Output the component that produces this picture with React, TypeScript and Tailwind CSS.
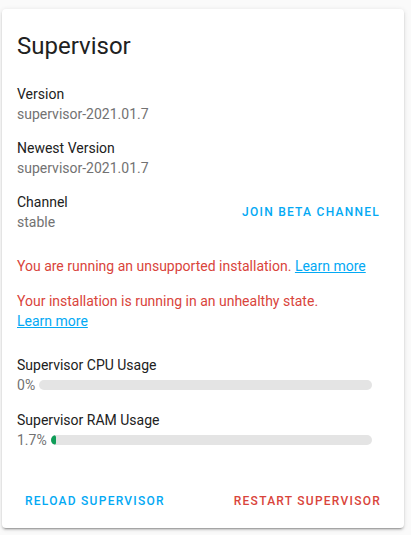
const Info = ({ label, value, className = '' }: { label: string; value: string; className?: string }) => (
    <div className={className}>
        <div className="text-[14px] leading-5 text-[#212121]">{label}</div>
        <div className="text-[14px] leading-5 text-[#727272]">{value}</div>
    </div>
);

const Usage = ({ label, percent, className = '' }: { label: string; percent: number; className?: string }) => (
    <div className={className}>
        <div className="text-[14px] leading-5 text-[#212121]">{label}</div>
        <div className="flex items-center">
            <span className="text-[14px] leading-5 text-[#727272]">{percent}%</span>
            <div className="ml-1 mr-4 h-[10px] flex-1 overflow-hidden rounded-full bg-[#e4e4e4]">
                <div className="h-full rounded-full bg-[#0f9d58]" style={{ width: `${percent}%` }} />
            </div>
        </div>
    </div>
);

export default function App() {
    return (
        <div className="min-h-[535px] w-[411px] bg-[#fafafa] pt-[9px] font-['Roboto',sans-serif]">
            <div className="ml-[2px] w-[402px] rounded bg-white shadow-[0_2px_2px_0_rgba(0,0,0,0.14),0_1px_5px_0_rgba(0,0,0,0.12),0_3px_1px_-2px_rgba(0,0,0,0.2)]">
                {/* Header */}
                <div className="pl-[15px] pr-4 pt-[21px]">
                    <h1 className="text-[24px] leading-8 font-normal text-[#212121]">Supervisor</h1>
                </div>

                {/* Content */}
                <div className="pl-[15px] pr-4">
                    <Info className="mt-[22px]" label="Version" value="supervisor-2021.01.7" />
                    <Info className="mt-[14px]" label="Newest Version" value="supervisor-2021.01.7" />
                    <div className="mt-[14px] flex items-center justify-between">
                        <Info label="Channel" value="stable" />
                        <button className="mr-2 text-[12px] font-medium uppercase tracking-[1.25px] text-[#03a9f4]">
                            Join beta channel
                        </button>
                    </div>

                    <p className="mt-6 text-[14px] leading-5 text-[#d9443b]">
                        You are running an unsupported installation.{' '}
                        <a className="text-[#03a9f4] underline">Learn more</a>
                    </p>
                    <p className="mt-[15px] text-[14px] leading-5 text-[#d9443b]">
                        Your installation is running in an unhealthy state.
                        <br />
                        <a className="text-[#03a9f4] underline">Learn more</a>
                    </p>

                    <Usage className="mt-6" label="Supervisor CPU Usage" percent={0} />
                    <Usage className="mt-[15px]" label="Supervisor RAM Usage" percent={1.7} />
                </div>

                {/* Actions */}
                <div className="mt-[33px] flex h-9 items-center justify-between px-[23px]">
                    <button className="text-[12px] font-medium uppercase tracking-[1.25px] text-[#03a9f4]">
                        Reload Supervisor
                    </button>
                    <button className="text-[12px] font-medium uppercase tracking-[1.25px] text-[#d9443b]">
                        Restart Supervisor
                    </button>
                </div>
                <div className="h-[9px]" />
            </div>
        </div>
    );
}
